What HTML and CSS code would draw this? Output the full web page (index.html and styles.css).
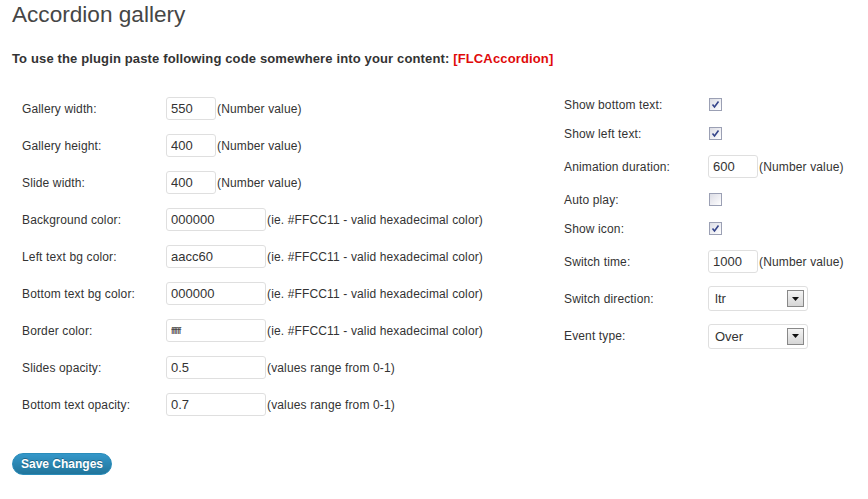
FILE: index.html
```html
<!DOCTYPE html>
<html>
<head>
<meta charset="utf-8">
<title>Accordion gallery</title>
<link rel="stylesheet" href="styles.css">
</head>
<body>
<div class="wrap">
  <h2 class="title">Accordion gallery</h2>
  <p class="intro">To use the plugin paste following code somewhere into your content: <span class="code">[FLCAccordion]</span></p>
  <div class="columns">
    <div class="col col-left">
      <div class="row"><span class="label">Gallery width:</span><span class="field"><input class="inp num" value="550"><span class="hint">(Number value)</span></span></div>
      <div class="row"><span class="label">Gallery height:</span><span class="field"><input class="inp num" value="400"><span class="hint">(Number value)</span></span></div>
      <div class="row"><span class="label">Slide width:</span><span class="field"><input class="inp num" value="400"><span class="hint">(Number value)</span></span></div>
      <div class="row"><span class="label">Background color:</span><span class="field"><input class="inp wide" value="000000"><span class="hint">(ie. #FFCC11 - valid hexadecimal color)</span></span></div>
      <div class="row"><span class="label">Left text bg color:</span><span class="field"><input class="inp wide" value="aacc60"><span class="hint">(ie. #FFCC11 - valid hexadecimal color)</span></span></div>
      <div class="row"><span class="label">Bottom text bg color:</span><span class="field"><input class="inp wide" value="000000"><span class="hint">(ie. #FFCC11 - valid hexadecimal color)</span></span></div>
      <div class="row"><span class="label">Border color:</span><span class="field"><input class="inp wide tiny" value="ffffff"><span class="hint">(ie. #FFCC11 - valid hexadecimal color)</span></span></div>
      <div class="row"><span class="label">Slides opacity:</span><span class="field"><input class="inp wide" value="0.5"><span class="hint">(values range from 0-1)</span></span></div>
      <div class="row"><span class="label">Bottom text opacity:</span><span class="field"><input class="inp wide" value="0.7"><span class="hint">(values range from 0-1)</span></span></div>
    </div>
    <div class="col col-right">
      <div class="row short"><span class="label">Show bottom text:</span><span class="field"><span class="check on"><svg viewBox="0 0 11 11" width="11" height="11"><path d="M2.5 5.5 L4.5 8 L8.5 2.5" fill="none" stroke="#34448a" stroke-width="1.6"/></svg></span></span></div>
      <div class="row short"><span class="label">Show left text:</span><span class="field"><span class="check on"><svg viewBox="0 0 11 11" width="11" height="11"><path d="M2.5 5.5 L4.5 8 L8.5 2.5" fill="none" stroke="#34448a" stroke-width="1.6"/></svg></span></span></div>
      <div class="row"><span class="label">Animation duration:</span><span class="field"><input class="inp num" value="600"><span class="hint">(Number value)</span></span></div>
      <div class="row short"><span class="label">Auto play:</span><span class="field"><span class="check"></span></span></div>
      <div class="row short"><span class="label">Show icon:</span><span class="field"><span class="check on"><svg viewBox="0 0 11 11" width="11" height="11"><path d="M2.5 5.5 L4.5 8 L8.5 2.5" fill="none" stroke="#34448a" stroke-width="1.6"/></svg></span></span></div>
      <div class="row"><span class="label">Switch time:</span><span class="field"><input class="inp num" value="1000"><span class="hint">(Number value)</span></span></div>
      <div class="row"><span class="label">Switch direction:</span><span class="field"><span class="select"><span class="sel-val">ltr</span><span class="sel-btn"><svg viewBox="0 0 7 4" width="7" height="4"><path d="M0 0 H7 L3.5 4 Z" fill="#111"/></svg></span></span></span></div>
      <div class="row tall"><span class="label">Event type:</span><span class="field"><span class="select"><span class="sel-val">Over</span><span class="sel-btn"><svg viewBox="0 0 7 4" width="7" height="4"><path d="M0 0 H7 L3.5 4 Z" fill="#111"/></svg></span></span></span></div>
    </div>
  </div>
  <button class="save" type="button">Save Changes</button>
</div>
</body>
</html>
```

FILE: styles.css
```css
html, body {
  margin: 0;
  padding: 0;
  background: #fff;
}

body {
  font-family: "Liberation Sans", Arial, sans-serif;
  font-size: 12px;
  color: #333;
}

.wrap {
  padding-left: 12px;
}

.title {
  margin: 0;
  height: 29px;
  font-size: 22.6px;
  line-height: 29px;
  font-weight: normal;
  color: #464646;
}

.intro {
  margin: 22px 0 0;
  font-size: 13px;
  line-height: 16px;
  font-weight: bold;
  color: #333;
  letter-spacing: 0.14px;
}

.code {
  color: #e00a0a;
}

.columns {
  display: flex;
  margin-top: 23px;
}

.col-left {
  width: 542px;
  padding-left: 10px;
}

.row {
  display: grid;
  grid-template-columns: 144px auto;
  align-items: center;
  height: 37px;
  letter-spacing: 0.14px;
}

.row.short {
  height: 29px;
}

.row.tall {
  height: 38px;
}

.label {
  color: #333;
}

.field {
  display: flex;
  align-items: center;
  gap: 1px;
}

.inp {
  box-sizing: border-box;
  height: 23px;
  margin: 0;
  padding: 0 4px;
  border: 1px solid #dfdfdf;
  border-radius: 3px;
  font-family: "Liberation Sans", Arial, sans-serif;
  font-size: 13px;
  color: #333;
  background: #fff;
  outline: none;
}

.inp.num {
  width: 50px;
}

.inp.wide {
  width: 100px;
}

.inp.tiny {
  font-size: 9px;
  letter-spacing: -0.8px;
}

.hint {
  color: #333;
}

.check {
  display: inline-flex;
  align-items: center;
  justify-content: center;
  box-sizing: border-box;
  width: 13px;
  height: 13px;
  margin-left: 1px;
  border: 1px solid #9ba0b4;
  background: linear-gradient(135deg, #dcdde5 0%, #f4f4f7 70%, #fff 100%);
}

.select {
  box-sizing: border-box;
  display: flex;
  align-items: center;
  justify-content: space-between;
  width: 100px;
  height: 25px;
  padding: 0 3px 0 6px;
  border: 1px solid #dfdfdf;
  border-radius: 3px;
  font-size: 13px;
  color: #333;
  background: #fff;
  letter-spacing: 0;
}

.sel-btn {
  box-sizing: border-box;
  display: flex;
  align-items: center;
  justify-content: center;
  width: 17px;
  height: 17px;
  border: 1px solid #888;
  background: linear-gradient(#f4f4f4, #d6d6d6);
}

.save {
  display: block;
  margin-top: 30px;
  height: 22px;
  padding: 0 8px;
  border: 1px solid #298cba;
  border-radius: 11px;
  background: linear-gradient(#3497c9, #21759b);
  color: #fff;
  font-family: "Liberation Sans", Arial, sans-serif;
  font-size: 12px;
  font-weight: bold;
  text-shadow: 0 -1px 0 rgba(0, 0, 0, 0.3);
  cursor: pointer;
}
```
